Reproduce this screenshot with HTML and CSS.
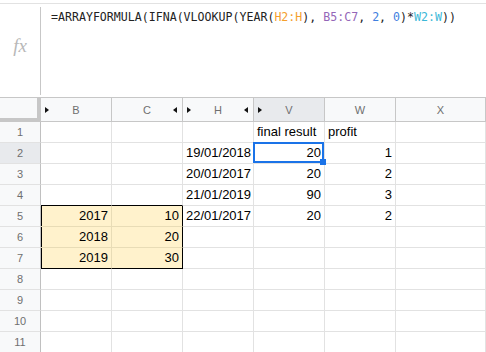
FILE: index.html
```html
<!DOCTYPE html>
<html lang="en">
<head>
    <meta charset="UTF-8">
    <title>Sheet</title>
    <link rel="stylesheet" href="styles.css">
</head>
<body>
    <!-- Formula bar -->
    <div class="formula-bar">
        <div class="fx">fx</div>
        <div class="formula">=ARRAYFORMULA(IFNA(VLOOKUP(YEAR(<span class="ref-h">H2:H</span>), <span class="ref-b">B5:C7</span>, <span class="num">2</span>, <span class="num">0</span>)*<span class="ref-w">W2:W</span>))</div>
    </div>

    <!-- Grid -->
    <table class="grid">
        <colgroup>
            <col class="c-rh">
            <col class="c-std">
            <col class="c-std">
            <col class="c-std">
            <col class="c-std">
            <col class="c-std">
            <col>
        </colgroup>
        <tr class="head">
            <th class="corner"></th>
            <th class="hid-left">B</th>
            <th class="hid-right">C</th>
            <th class="hid-left hid-right">H</th>
            <th class="hid-left active">V</th>
            <th>W</th>
            <th>X</th>
        </tr>
        <tr>
            <td class="rh">1</td>
            <td></td><td class="blk-b"></td><td></td>
            <td>final result</td><td>profit</td><td></td>
        </tr>
        <tr>
            <td class="rh active">2</td>
            <td></td><td></td><td>19/01/2018</td>
            <td class="n selected">20</td><td class="n">1</td><td></td>
        </tr>
        <tr>
            <td class="rh">3</td>
            <td></td><td></td><td>20/01/2017</td>
            <td class="n">20</td><td class="n">2</td><td></td>
        </tr>
        <tr>
            <td class="rh">4</td>
            <td class="top-edge"></td><td class="top-edge"></td><td>21/01/2019</td>
            <td class="n">90</td><td class="n">3</td><td></td>
        </tr>
        <tr>
            <td class="rh">5</td>
            <td class="n lookup first">2017</td><td class="n lookup last">10</td><td>22/01/2017</td>
            <td class="n">20</td><td class="n">2</td><td></td>
        </tr>
        <tr>
            <td class="rh">6</td>
            <td class="n lookup first">2018</td><td class="n lookup last">20</td><td></td>
            <td></td><td></td><td></td>
        </tr>
        <tr>
            <td class="rh">7</td>
            <td class="n lookup first bottom">2019</td><td class="n lookup last bottom">30</td><td></td>
            <td></td><td></td><td></td>
        </tr>
        <tr><td class="rh">8</td><td></td><td></td><td></td><td></td><td></td><td></td></tr>
        <tr><td class="rh">9</td><td></td><td></td><td></td><td></td><td></td><td></td></tr>
        <tr><td class="rh">10</td><td></td><td></td><td></td><td></td><td></td><td></td></tr>
        <tr><td class="rh">11</td><td></td><td></td><td></td><td></td><td></td><td></td></tr>
    </table>
</body>
</html>
```

FILE: styles.css
```css
* {
    box-sizing: border-box;
    margin: 0;
    padding: 0;
}

body {
    width: 486px;
    height: 352px;
    overflow: hidden;
    background: #fff;
    font-family: 'Liberation Sans', Arial, sans-serif;
}

/* formula bar */
.formula-bar {
    display: flex;
    margin-top: 3px;
    height: 95px;
    border-top: 1px solid #e2e2e2;
    border-bottom: 1px solid #c7c7c7;
}

.fx {
    width: 41px;
    margin: 3px 0 2px;
    padding-top: 29px;
    border-right: 1px solid #c7c7c7;
    text-align: center;
    font-family: 'Liberation Serif', serif;
    font-style: italic;
    font-size: 19px;
    line-height: 20px;
    color: #b8b8b8;
}

.formula {
    padding: 5px 0 0 10px;
    font-family: 'DejaVu Sans Mono', monospace;
    font-size: 11.6px;
    line-height: 16px;
    color: #222;
    white-space: nowrap;
}

.ref-h { color: #f5a02c; }
.ref-b { color: #9466b8; }
.num { color: #3f7fe0; }
.ref-w { color: #3cb8d8; }

/* grid */
.grid {
    width: 486px;
    table-layout: fixed;
    border-collapse: separate;
    border-spacing: 0;
    font-size: 13px;
    color: #000;
}

.c-rh { width: 41px; }
.c-std { width: 71px; }

.grid td,
.grid th {
    height: 21px;
    padding: 0 3px;
    border-right: 1px solid #e2e2e2;
    border-bottom: 1px solid #e2e2e2;
    line-height: 20px;
    white-space: nowrap;
    overflow: visible;
    text-align: left;
    font-weight: normal;
}

.grid th {
    position: relative;
    height: 24px;
    background: #f8f9fa;
    border-right-color: #c7c7c7;
    border-bottom-color: #c7c7c7;
    text-align: center;
    font-size: 11px;
    color: #6f6f6f;
}

.grid th.corner {
    border-right: 4px solid #c7c7c7;
    border-bottom: 4px solid #c7c7c7;
}

.grid th.active,
.grid td.rh.active {
    background: #e8eaed;
}

/* hidden column arrows */
.hid-left::before,
.hid-right::after {
    content: '';
    position: absolute;
    top: 9px;
    border-top: 3.5px solid transparent;
    border-bottom: 3.5px solid transparent;
}

.hid-left::before {
    left: 4px;
    border-left: 4px solid #111;
}

.hid-right::after {
    right: 5px;
    border-right: 4px solid #111;
}

.grid td.rh {
    padding: 0;
    background: #f8f9fa;
    border-right-color: #c0c0c0;
    text-align: center;
    font-size: 11px;
    color: #6f6f6f;
}

.grid td.n {
    text-align: right;
}

/* lookup block */
.grid td.lookup {
    background: #fff2cc;
    border-bottom-color: #e8dcb6;
    border-right-color: #e8dcb6;
}

.grid td.top-edge {
    border-bottom-color: #000;
}

.grid td.lookup.first {
    box-shadow: inset 1px 0 0 #000;
}

.grid td.lookup.last {
    border-right-color: #000;
}

.grid td.lookup.bottom {
    border-bottom-color: #000;
}

/* selected cell */
.grid td.selected {
    position: relative;
}

.grid td.selected::before {
    content: '';
    position: absolute;
    top: -1px;
    left: -1px;
    right: 0;
    bottom: 0;
    border: 2px solid #1a73e8;
}

.grid td.selected::after {
    content: '';
    position: absolute;
    right: -2px;
    bottom: -2px;
    width: 6px;
    height: 6px;
    background: #1a73e8;
}
```
